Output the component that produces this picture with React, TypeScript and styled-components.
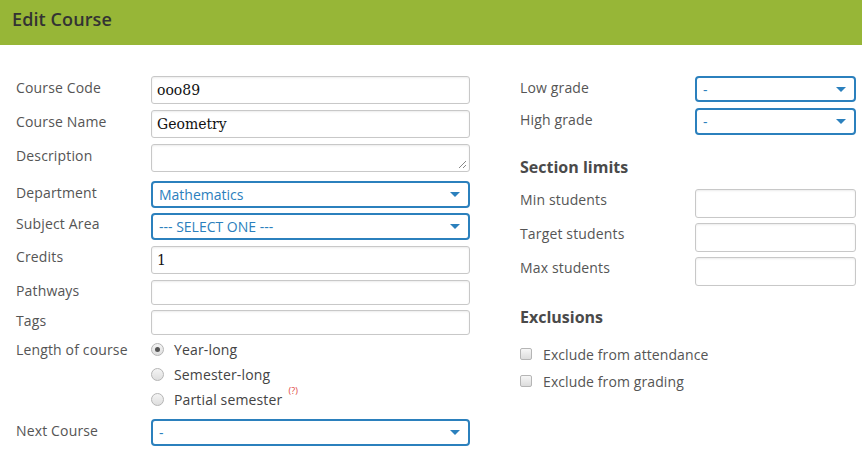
import React from "react";
import styled, { createGlobalStyle } from "styled-components";

const Global = createGlobalStyle`
  html, body { margin: 0; padding: 0; background: #fff; }
  body { font-family: "Open Sans", "Liberation Sans", sans-serif; color: #555; }
  * { box-sizing: border-box; }
`;

const Header = styled.header`
  height: 45px;
  background: #97b637;
  display: flex;
  align-items: center;
  padding: 0 12px 8px;
`;

const Title = styled.h1`
  margin: 0;
  font-size: 18px;
  font-weight: 600;
  color: #333;
  letter-spacing: 0.1px;
`;

const Body = styled.div`
  display: grid;
  grid-template-columns: 454px 336px;
  column-gap: 50px;
  padding: 31px 0 0 16px;
`;

const Column = styled.div`
  display: flex;
  flex-direction: column;
`;

const Row = styled.div<{ $label: number; $mt?: number }>`
  display: grid;
  grid-template-columns: ${(p) => p.$label}px 1fr;
  align-items: start;
  margin-top: ${(p) => p.$mt ?? 0}px;
`;

const Label = styled.label<{ $pt?: number }>`
  font-size: 14px;
  color: #555;
  padding-top: ${(p) => p.$pt ?? 4}px;
  line-height: 18px;
  letter-spacing: 0.15px;
`;

const TextInput = styled.div<{ $h: number }>`
  height: ${(p) => p.$h}px;
  border: 1px solid #c8c8c8;
  border-radius: 3px;
  box-shadow: inset 0 1px 2px rgba(0, 0, 0, 0.08);
  background: #fff;
  padding: 0 5px;
  display: flex;
  align-items: center;
  font-family: "DejaVu Serif", "Liberation Serif", serif;
  font-size: 14px;
  color: #111;
  position: relative;
`;

const Resize = styled.svg`
  position: absolute;
  right: 3px;
  bottom: 3px;
`;

const Select = styled.div<{ $h: number }>`
  height: ${(p) => p.$h}px;
  border: 2px solid #2b80bd;
  border-radius: 4px;
  background: #fff;
  padding: 0 6px;
  display: flex;
  align-items: center;
  justify-content: space-between;
  font-size: 14px;
  color: #2b80bd;
`;

const Arrow = styled.span`
  width: 0;
  height: 0;
  border-left: 5px solid transparent;
  border-right: 5px solid transparent;
  border-top: 5px solid #2b80bd;
  margin-right: 2px;
`;

const RadioList = styled.div`
  display: flex;
  flex-direction: column;
  gap: 7px;
`;

const Choice = styled.div`
  display: flex;
  align-items: center;
  height: 18px;
  font-size: 14px;
  color: #444;
  letter-spacing: 0.15px;
`;

const Radio = styled.span<{ $on?: boolean }>`
  width: 13px;
  height: 13px;
  border-radius: 50%;
  border: 1px solid #b5b5b5;
  background: linear-gradient(#f4f4f4, #dedede);
  margin: 0 10px 0 0;
  display: flex;
  align-items: center;
  justify-content: center;
  &::after {
    content: "";
    display: ${(p) => (p.$on ? "block" : "none")};
    width: 5px;
    height: 5px;
    border-radius: 50%;
    background: #555;
  }
`;

const Help = styled.sup`
  font-size: 9px;
  color: #e0463c;
  margin-left: 6px;
  align-self: flex-start;
  line-height: 9px;
  margin-top: -4px;
`;

const Heading = styled.h2<{ $mt: number }>`
  margin: ${(p) => p.$mt}px 0 0;
  font-size: 16px;
  font-weight: 700;
  color: #4a4a4a;
  line-height: 20px;
`;

const Check = styled.div<{ $mt: number }>`
  display: flex;
  align-items: center;
  margin-top: ${(p) => p.$mt}px;
  font-size: 14px;
  color: #555;
  height: 18px;
  letter-spacing: 0.1px;
`;

const Box = styled.span`
  width: 12px;
  height: 12px;
  border: 1px solid #b5b5b5;
  border-radius: 2px;
  background: linear-gradient(#f6f6f6, #dcdcdc);
  margin-right: 11px;
`;

export default function App() {
  return (
    <>
      <Global />
      <Header>
        <Title>Edit Course</Title>
      </Header>
      <Body>
        <Column>
          <Row $label={135}>
            <Label $pt={3}>Course Code</Label>
            <TextInput $h={28}>ooo89</TextInput>
          </Row>
          <Row $label={135} $mt={6}>
            <Label $pt={3}>Course Name</Label>
            <TextInput $h={28}>Geometry</TextInput>
          </Row>
          <Row $label={135} $mt={6}>
            <Label $pt={3}>Description</Label>
            <TextInput $h={28}>
              <Resize width="8" height="8" viewBox="0 0 8 8">
                <path d="M1 8 L8 1 M5 8 L8 5" stroke="#888" strokeWidth="1" />
              </Resize>
            </TextInput>
          </Row>
          <Row $label={135} $mt={9}>
            <Label $pt={3}>Department</Label>
            <Select $h={27}>
              Mathematics
              <Arrow />
            </Select>
          </Row>
          <Row $label={135} $mt={5}>
            <Label $pt={2}>Subject Area</Label>
            <Select $h={27}>
              --- SELECT ONE ---
              <Arrow />
            </Select>
          </Row>
          <Row $label={135} $mt={6}>
            <Label $pt={2}>Credits</Label>
            <TextInput $h={28}>1</TextInput>
          </Row>
          <Row $label={135} $mt={6}>
            <Label $pt={2}>Pathways</Label>
            <TextInput $h={25} />
          </Row>
          <Row $label={135} $mt={5}>
            <Label $pt={2}>Tags</Label>
            <TextInput $h={25} />
          </Row>
          <Row $label={135} $mt={5}>
            <Label $pt={1}>Length of course</Label>
            <RadioList>
              <Choice>
                <Radio $on />
                Year-long
              </Choice>
              <Choice>
                <Radio />
                Semester-long
              </Choice>
              <Choice>
                <Radio />
                Partial semester
                <Help>(?)</Help>
              </Choice>
            </RadioList>
          </Row>
          <Row $label={135} $mt={11}>
            <Label $pt={3}>Next Course</Label>
            <Select $h={27}>
              -
              <Arrow />
            </Select>
          </Row>
        </Column>
        <Column>
          <Row $label={175}>
            <Label $pt={3}>Low grade</Label>
            <Select $h={26}>
              -
              <Arrow />
            </Select>
          </Row>
          <Row $label={175} $mt={6}>
            <Label $pt={3}>High grade</Label>
            <Select $h={27}>
              -
              <Arrow />
            </Select>
          </Row>
          <Heading $mt={22}>Section limits</Heading>
          <Row $label={175} $mt={12}>
            <Label $pt={2}>Min students</Label>
            <TextInput $h={29} />
          </Row>
          <Row $label={175} $mt={5}>
            <Label $pt={2}>Target students</Label>
            <TextInput $h={29} />
          </Row>
          <Row $label={175} $mt={5}>
            <Label $pt={2}>Max students</Label>
            <TextInput $h={29} />
          </Row>
          <Heading $mt={21}>Exclusions</Heading>
          <Check $mt={18}>
            <Box />
            Exclude from attendance
          </Check>
          <Check $mt={9}>
            <Box />
            Exclude from grading
          </Check>
        </Column>
      </Body>
    </>
  );
}
